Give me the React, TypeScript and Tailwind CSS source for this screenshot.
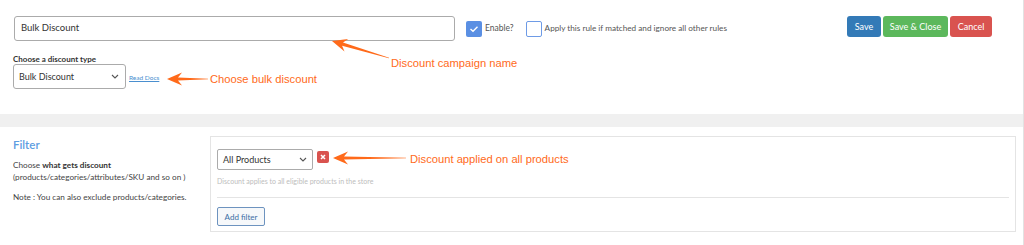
import React from "react";

const Chevron = () => (
  <svg width="8" height="5" viewBox="0 0 8 5" className="shrink-0">
    <polyline points="1,1 4,4 7,1" fill="none" stroke="#555" strokeWidth="1.1" />
  </svg>
);

const ORANGE = "#ff6a1a";

function Arrow({ x1, y1, x2, y2 }: { x1: number; y1: number; x2: number; y2: number }) {
  const dx = x2 - x1;
  const dy = y2 - y1;
  const len = Math.hypot(dx, dy);
  const ux = dx / len;
  const uy = dy / len;
  const px = -uy;
  const py = ux;
  const headLen = 15;
  const headW = 6.5;
  const notch = 4;
  const bx = x2 - ux * headLen;
  const by = y2 - uy * headLen;
  const nx = x2 - ux * (headLen - notch);
  const ny = y2 - uy * (headLen - notch);
  const shaftW = 1.6;
  const pts = [
    [x1 + px * 0.3, y1 + py * 0.3],
    [nx + px * shaftW, ny + py * shaftW],
    [bx + px * headW, by + py * headW],
    [x2, y2],
    [bx - px * headW, by - py * headW],
    [nx - px * shaftW, ny - py * shaftW],
    [x1 - px * 0.3, y1 - py * 0.3],
  ]
    .map((p) => p.join(","))
    .join(" ");
  return <polygon points={pts} fill={ORANGE} />;
}

export default function App() {
  return (
    <div
      className="relative w-[1024px] h-[245px] overflow-hidden bg-white border-r border-[#e2e2e2] text-[#444]"
      style={{ fontFamily: "Lato, 'Open Sans', sans-serif" }}
    >
      {/* Top section */}
      <div className="h-[114px] pt-[16px]">
        <div className="flex items-start">
          <div className="ml-[14px] w-[441px] h-[25px] border border-[#ababab] rounded-[3px] flex items-center pl-[6px] text-[9.5px] text-[#333]">
            Bulk Discount
          </div>
          <div className="ml-[11px] h-[25px] flex items-center">
            <div className="w-[16px] h-[16px] rounded-[2px] bg-[#5a8fe3] flex items-center justify-center">
              <svg width="10" height="8" viewBox="0 0 10 8">
                <polyline points="1.5,4 4,6.2 8.5,1.8" fill="none" stroke="#fff" strokeWidth="1.4" />
              </svg>
            </div>
            <span className="ml-[3px] text-[8.5px] text-[#555]">Enable?</span>
            <div className="ml-[12px] w-[16px] h-[16px] rounded-[2px] border-[1.5px] border-[#6e9be6] bg-white" />
            <span className="ml-[3px] text-[8.2px] text-[#555]">
              Apply this rule if matched and ignore all other rules
            </span>
          </div>
          <div className="ml-auto mr-[31px] flex gap-[2px]">
            <button className="h-[21px] w-[34px] rounded-[3px] bg-[#337ab7] text-white text-[9px] flex items-center justify-center">
              Save
            </button>
            <button className="h-[21px] w-[65px] rounded-[3px] bg-[#5cb85c] text-white text-[9px] flex items-center justify-center">
              Save &amp; Close
            </button>
            <button className="h-[21px] w-[42px] rounded-[3px] bg-[#d9534f] text-white text-[9px] flex items-center justify-center">
              Cancel
            </button>
          </div>
        </div>

        <div className="ml-[13px] mt-[14px] text-[8px] leading-[9px] font-bold text-[#333]">
          Choose a discount type
        </div>
        <div className="flex items-end">
          <div className="ml-[13px] w-[113px] h-[25px] border border-[#ababab] rounded-[3px] flex items-center justify-between pl-[5px] pr-[6px] text-[9px] text-[#333]">
            <span>Bulk Discount</span>
            <Chevron />
          </div>
          <a className="ml-[3px] mb-[6px] text-[6.5px] text-[#4a8fcf] underline">Read Docs</a>
        </div>
      </div>

      {/* Gray band */}
      <div className="h-[13px] bg-[#f0f0f0]" />

      {/* Bottom section */}
      <div className="flex pt-[9px]">
        <div className="w-[210px] shrink-0 pl-[13px] pt-[2px]">
          <div className="text-[11.5px] leading-[14px] font-semibold text-[#5d9de2]">Filter</div>
          <div className="mt-[7px] text-[8.2px] leading-[12px] text-[#444]">
            Choose <b className="text-[#333]">what gets discount</b>
            <br />
            (products/categories/attributes/SKU and so on )
          </div>
          <div className="mt-[8px] text-[8.2px] leading-[12px] text-[#444]">
            Note : You can also exclude products/categories.
          </div>
        </div>
        <div className="w-[806px] h-[96px] border border-[#e4e4e4] pt-[12px] pl-[6px] pr-[6px]">
          <div className="flex items-start">
            <div className="w-[96px] h-[21px] border border-[#ababab] rounded-[2px] flex items-center justify-between pl-[5px] pr-[5px] text-[9px] text-[#333]">
              <span>All Products</span>
              <Chevron />
            </div>
            <div className="ml-[4px] mt-[2px] w-[12px] h-[12px] rounded-[2px] bg-[#d9534f] flex items-center justify-center">
              <svg width="6" height="6" viewBox="0 0 6 6">
                <path d="M1 1 L5 5 M5 1 L1 5" stroke="#fff" strokeWidth="1.5" />
              </svg>
            </div>
          </div>
          <div className="mt-[7px] text-[7px] leading-[9px] text-[#bdbdbd]">
            Discount applies to all eligible products in the store
          </div>
          <div className="mt-[11px] h-px bg-[#e4e4e4]" />
          <button className="mt-[9px] h-[19px] w-[48px] rounded-[2px] border border-[#6d93bf] bg-[#f6f8fa] text-[8px] text-[#3b6ea5] flex items-center justify-center">
            Add filter
          </button>
        </div>
      </div>

      {/* Annotations */}
      <svg className="absolute inset-0 pointer-events-none" width="1024" height="245">
        <Arrow x1={389} y1={58} x2={332} y2={41} />
        <Arrow x1={208} y1={79} x2={167} y2={79} />
        <Arrow x1={406} y1={158} x2={333} y2={158} />
      </svg>
      <div
        className="absolute left-[391px] top-[56px] text-[11.2px] leading-[14px] pointer-events-none"
        style={{ fontFamily: "'Liberation Sans', Arial, sans-serif", color: ORANGE }}
      >
        Discount campaign name
      </div>
      <div
        className="absolute left-[210px] top-[72px] text-[11.2px] leading-[14px] pointer-events-none"
        style={{ fontFamily: "'Liberation Sans', Arial, sans-serif", color: ORANGE }}
      >
        Choose bulk discount
      </div>
      <div
        className="absolute left-[410px] top-[152px] text-[11.2px] leading-[14px] pointer-events-none"
        style={{ fontFamily: "'Liberation Sans', Arial, sans-serif", color: ORANGE }}
      >
        Discount applied on all products
      </div>
    </div>
  );
}
